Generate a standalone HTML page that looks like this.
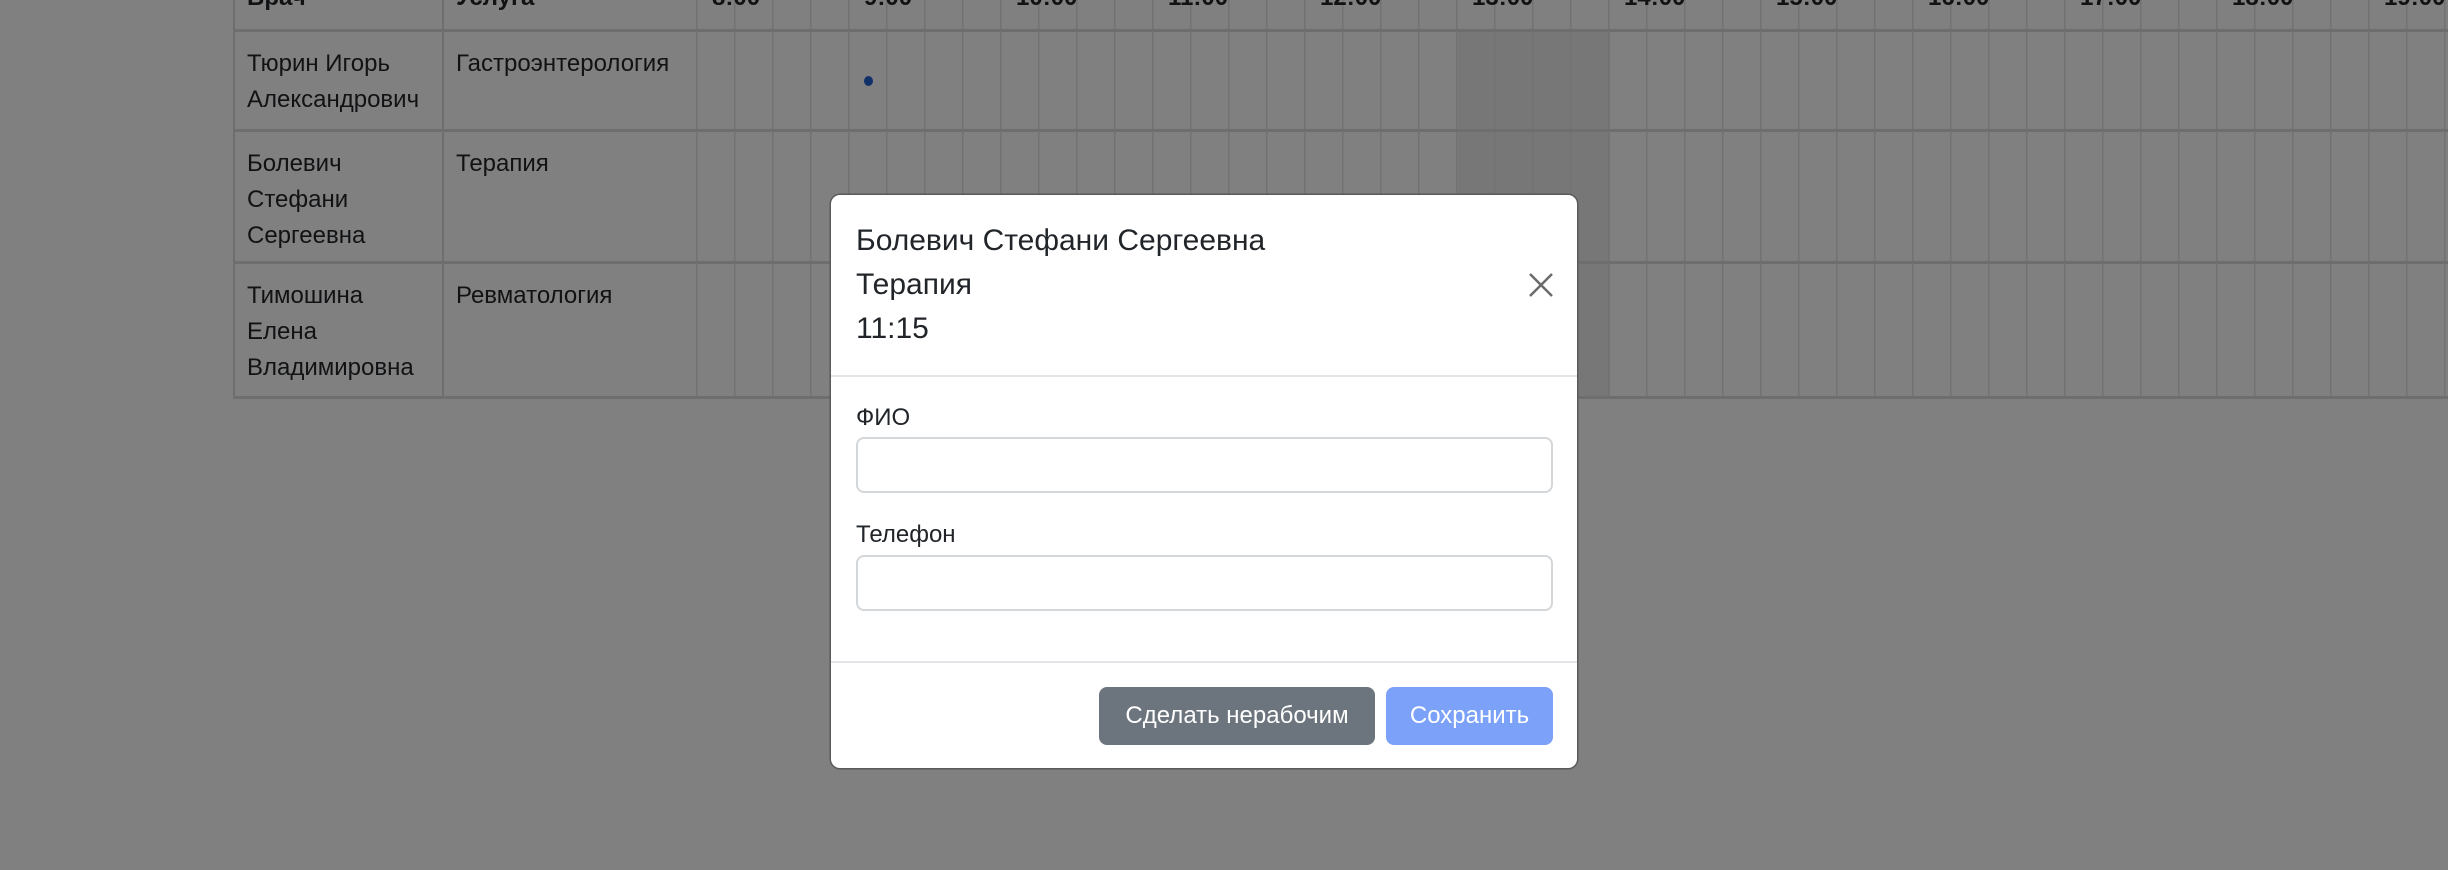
<!DOCTYPE html>
<html><head><meta charset="utf-8">
<style>
*{box-sizing:border-box;margin:0;padding:0}
body{width:2448px;height:870px;overflow:hidden;background:#808080;font-family:"Liberation Sans",Arial,sans-serif;color:#111214;position:relative}
.a{position:absolute}
.t{font-size:24px;line-height:36px;white-space:nowrap}
.h{font-weight:bold}
.vl{background:repeating-linear-gradient(90deg,#727272 0,#727272 1.5px,transparent 1.5px,transparent 38px)}
.hl{background:#6e6e6e;height:3px;left:233px;width:2215px}
.vb{background:#6e6e6e;width:2px;top:-10px;height:407px}
.lbl{font-size:24px;line-height:36px;color:#212529}
.inp{border:2px solid #d4d7da;border-radius:8px;background:#fff;height:56px;left:25px;width:697px}
.btn{color:#fff;font-size:24px;text-align:center;line-height:58px;border-radius:8px;height:58px;top:492px}
</style></head><body>
<div class="a" style="left:1458px;top:30px;width:152px;height:367px;background:#777"></div>
<div class="a vl" style="left:696px;top:-10px;width:1752px;height:407px"></div>
<div class="a vb" style="left:233px"></div>
<div class="a vb" style="left:442px"></div>
<div class="a hl" style="top:29px"></div>
<div class="a hl" style="top:129px"></div>
<div class="a hl" style="top:261px"></div>
<div class="a hl" style="top:396px"></div>
<div class="a t h" style="left:247px;top:-20px">Врач</div>
<div class="a t h" style="left:456px;top:-20px">Услуга</div>
<div class="a t h" style="left:712px;top:-20px">8:00</div>
<div class="a t h" style="left:864px;top:-20px">9:00</div>
<div class="a t h" style="left:1016px;top:-20px">10:00</div>
<div class="a t h" style="left:1168px;top:-20px">11:00</div>
<div class="a t h" style="left:1320px;top:-20px">12:00</div>
<div class="a t h" style="left:1472px;top:-20px">13:00</div>
<div class="a t h" style="left:1624px;top:-20px">14:00</div>
<div class="a t h" style="left:1776px;top:-20px">15:00</div>
<div class="a t h" style="left:1928px;top:-20px">16:00</div>
<div class="a t h" style="left:2080px;top:-20px">17:00</div>
<div class="a t h" style="left:2232px;top:-20px">18:00</div>
<div class="a t h" style="left:2384px;top:-20px">19:00</div>
<div class="a t" style="left:247px;top:46px">Тюрин Игорь<br>Александрович</div>
<div class="a t" style="left:456px;top:46px">Гастроэнтерология</div>
<div class="a" style="left:864px;top:76px;width:9px;height:10px;border-radius:50%;background:#10306a"></div>
<div class="a t" style="left:247px;top:146px">Болевич<br>Стефани<br>Сергеевна</div>
<div class="a t" style="left:456px;top:146px">Терапия</div>
<div class="a t" style="left:247px;top:278px">Тимошина<br>Елена<br>Владимировна</div>
<div class="a t" style="left:456px;top:278px">Ревматология</div>
<div class="a" style="left:831px;top:195px;width:746px;height:573px;background:#fff;border-radius:9px;box-shadow:0 0 0 1.5px #5a5a5a">
  <div class="a" style="left:25px;top:24px;font-size:30px;line-height:44px;color:#212529">Болевич Стефани Сергеевна<br>Терапия<br>11:15</div>
  <svg class="a" style="left:697px;top:77px" width="26" height="26" viewBox="0 0 26 26"><path d="M2 2L24 24M24 2L2 24" stroke="#6b6b6b" stroke-width="2.5"/></svg>
  <div class="a" style="left:0;top:180px;width:746px;height:2px;background:#e3e5e8"></div>
  <div class="a lbl" style="left:25px;top:205px">ФИО</div>
  <div class="a inp" style="top:242px"></div>
  <div class="a lbl" style="left:25px;top:322px">Телефон</div>
  <div class="a inp" style="top:360px"></div>
  <div class="a" style="left:0;top:466px;width:746px;height:2px;background:#e3e5e8"></div>
  <div class="a btn" style="left:268px;width:276px;background:#6c757d">Сделать нерабочим</div>
  <div class="a btn" style="left:555px;width:167px;background:#7ca1f8">Сохранить</div>
</div>
</body></html>
